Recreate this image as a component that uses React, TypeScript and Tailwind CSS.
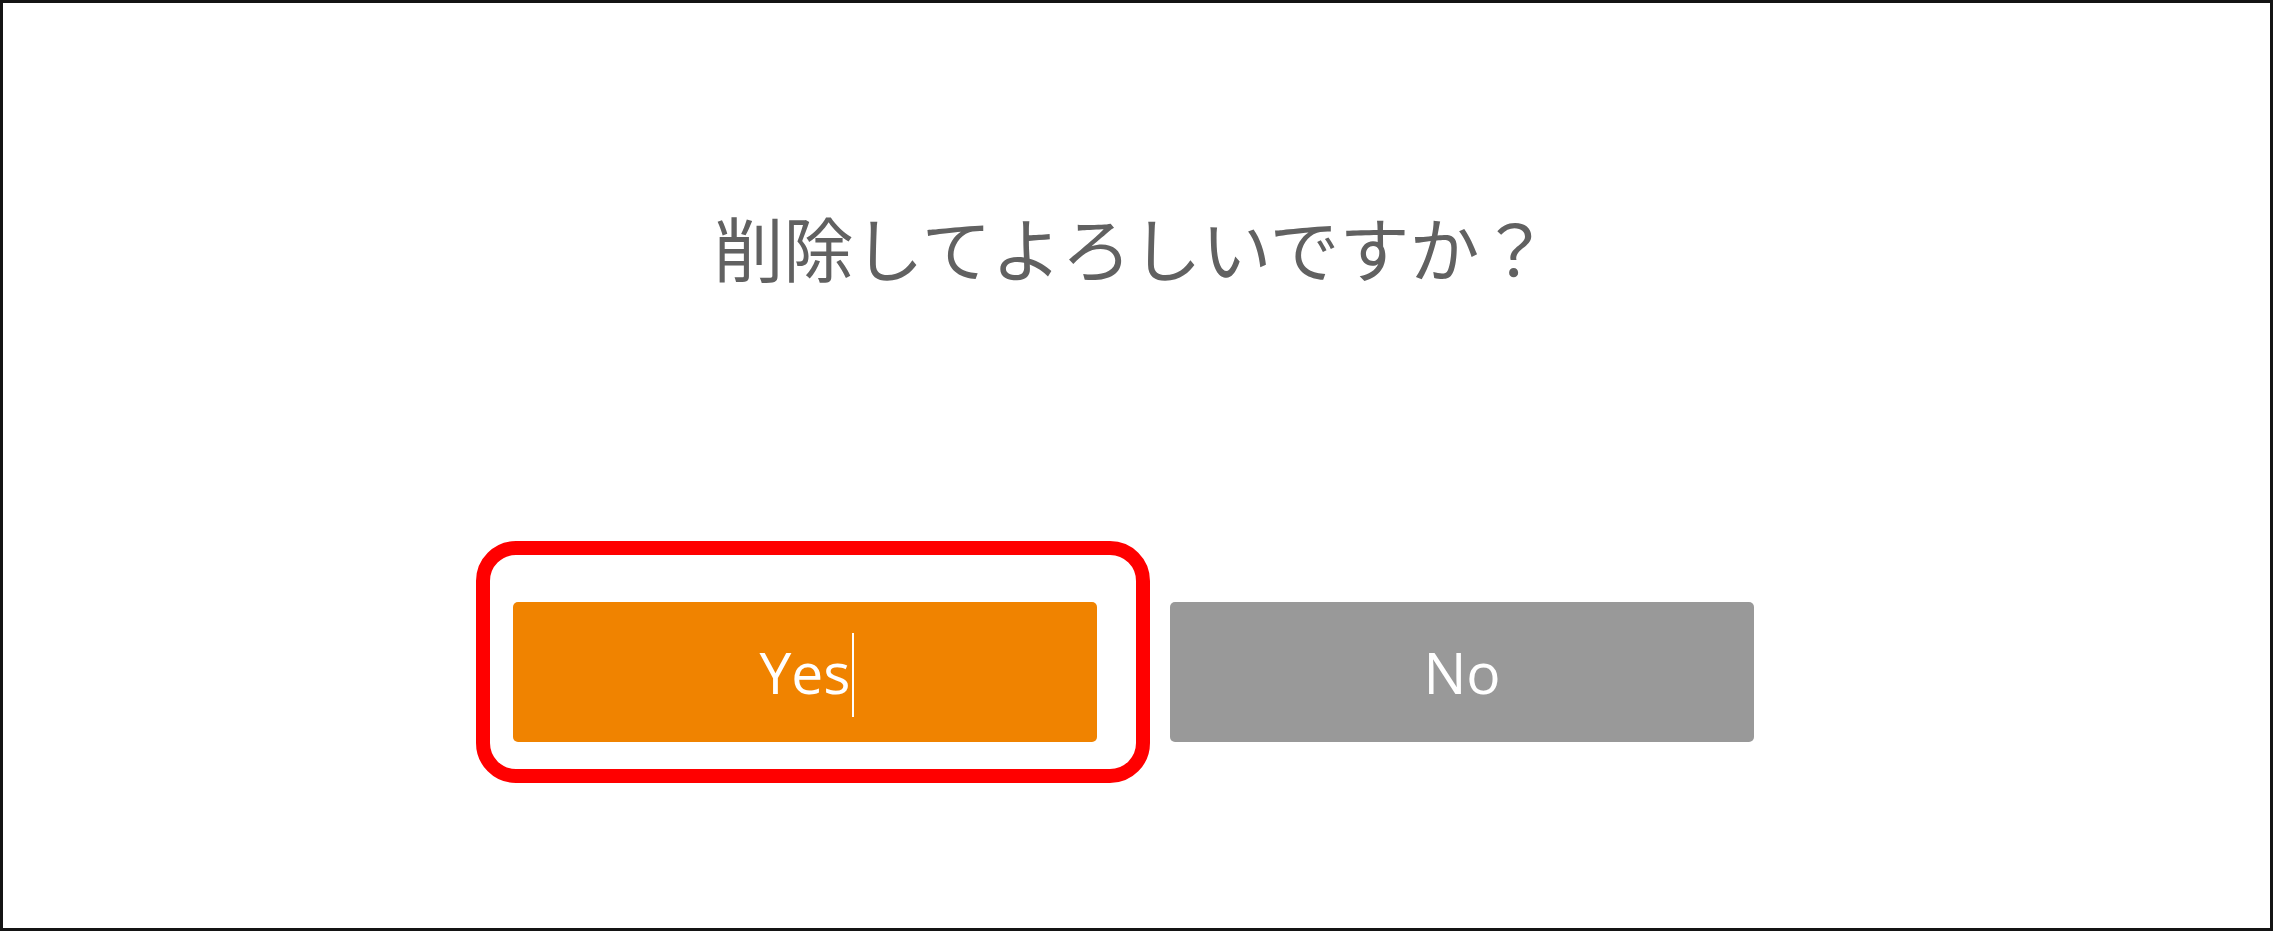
import React from 'react';

const App: React.FC = () => {
  return (
    <div className="h-[931px] w-full border-[3px] border-[#141414] bg-white flex flex-col items-center">
      {/* Confirm message */}
      <p
        className="mt-[209px] text-[70px] leading-none text-[#616161] mr-[10px]"
        style={{ fontFamily: '"Noto Sans CJK JP", "Noto Sans", sans-serif' }}
      >
        削除してよろしいですか？
      </p>

      {/* Buttons */}
      <div
        className="mt-[320px] flex gap-[73px] mr-[6px]"
        style={{ fontFamily: '"Open Sans", "Noto Sans", sans-serif' }}
      >
        <div className="relative">
          <button className="relative w-[584px] h-[140px] rounded-[5px] bg-[#f08300] text-white text-[57px] leading-none flex items-center justify-center">
            Yes
            <span className="absolute left-[339px] top-[31px] h-[84px] w-[2px] bg-white" />
          </button>
          {/* red highlight frame */}
          <div className="absolute -top-[61px] -left-[37px] -right-[53px] -bottom-[41px] border-[14px] border-[#ff0000] rounded-[40px] pointer-events-none" />
        </div>
        <button className="w-[584px] h-[140px] rounded-[5px] bg-[#999999] text-white text-[57px] leading-none flex items-center justify-center">
          No
        </button>
      </div>
    </div>
  );
};

export default App;
